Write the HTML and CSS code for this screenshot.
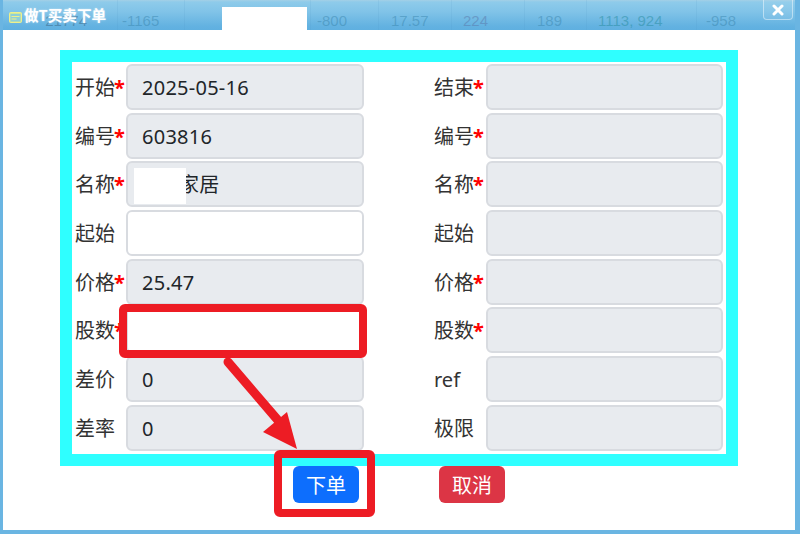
FILE: index.html
```html
<!DOCTYPE html>
<html lang="zh-CN">
<head>
<meta charset="utf-8">
<title>做T买卖下单</title>
<link rel="stylesheet" href="styles.css">
</head>
<body>
<div class="window">
  <header class="titlebar">
    <div class="ghost-row">
      <span class="ghost c1">21774</span>
      <span class="ghost c2">-1165</span>
      <span class="ghost c3"></span>
      <span class="ghost c4">-800</span>
      <span class="ghost c5">17.57</span>
      <span class="ghost c6">224</span>
      <span class="ghost c7">189</span>
      <span class="ghost c8">1113, 924</span>
      <span class="ghost c9">-958</span>
    </div>
    <svg class="title-icon" width="13" height="11" viewBox="0 0 13 11">
      <rect x="0.5" y="0.5" width="12" height="10" rx="1" fill="#cfe89a" stroke="#eef08c"/>
      <rect x="1.5" y="2" width="10" height="7.5" fill="#8fcfd8"/>
      <rect x="2.5" y="4" width="8" height="1" fill="#eef08c"/>
      <rect x="2.5" y="6.5" width="5" height="1" fill="#eef08c"/>
    </svg>
    <span class="title-text">做T买卖下单</span>
    <div class="mask-title"></div>
    <button class="close" type="button">
      <svg width="12" height="12" viewBox="0 0 12 12"><path d="M2 2 10 10M10 2 2 10" stroke="#fff" stroke-width="3" stroke-linecap="round"/></svg>
    </button>
  </header>
  <main class="content">
    <form class="frame">
      <div class="row"><label class="lbl">开始<b>*</b></label><div class="field ro">2025-05-16</div></div>
      <div class="row"><label class="lbl">结束<b>*</b></label><div class="field ro"></div></div>
      <div class="row"><label class="lbl">编号<b>*</b></label><div class="field ro">603816</div></div>
      <div class="row"><label class="lbl">编号<b>*</b></label><div class="field ro"></div></div>
      <div class="row"><label class="lbl">名称<b>*</b></label><div class="field ro"><span class="mask-name"></span>家居</div></div>
      <div class="row"><label class="lbl">名称<b>*</b></label><div class="field ro"></div></div>
      <div class="row"><label class="lbl">起始</label><div class="field"></div></div>
      <div class="row"><label class="lbl">起始</label><div class="field ro"></div></div>
      <div class="row"><label class="lbl">价格<b>*</b></label><div class="field ro">25.47</div></div>
      <div class="row"><label class="lbl">价格<b>*</b></label><div class="field ro"></div></div>
      <div class="row"><label class="lbl">股数<b>*</b></label><div class="field"></div></div>
      <div class="row"><label class="lbl">股数<b>*</b></label><div class="field ro"></div></div>
      <div class="row"><label class="lbl">差价</label><div class="field ro">0</div></div>
      <div class="row"><label class="lbl">ref</label><div class="field ro"></div></div>
      <div class="row"><label class="lbl">差率</label><div class="field ro">0</div></div>
      <div class="row"><label class="lbl">极限</label><div class="field ro"></div></div>
    </form>
    <div class="actions">
      <button class="btn primary" type="button">下单</button>
      <button class="btn danger" type="button">取消</button>
    </div>
  </main>
  <svg class="annotations" width="800" height="534" viewBox="0 0 800 534">
    <rect x="123" y="308" width="240" height="46" rx="2" fill="none" stroke="#ed1c24" stroke-width="8"/>
    <rect x="278" y="454" width="93" height="59" rx="2" fill="none" stroke="#ed1c24" stroke-width="8"/>
    <path d="M228 362 282 425" stroke="#ed1c24" stroke-width="9" stroke-linecap="round" fill="none"/>
    <path d="M287 412 263 432 297 449Z" fill="#ed1c24"/>
  </svg>
</div>
</body>
</html>
```
FILE: styles.css
```css
* { box-sizing: border-box; }
html, body { margin: 0; padding: 0; }
body {
  width: 800px;
  height: 534px;
  overflow: hidden;
  font-family: "Noto Sans", "Noto Sans CJK SC", sans-serif;
  color: #212529;
}
.window {
  position: relative;
  width: 800px;
  height: 534px;
  display: flex;
  flex-direction: column;
  background: #6ab5e2;
  border-left: 3px solid #6ab5e2;
  border-right: 5px solid #6ab5e2;
  border-bottom: 4px solid #6ab5e2;
  overflow: hidden;
}
.titlebar {
  flex: 0 0 30px;
  margin: 0 -5px 0 -3px;
  position: relative;
  display: flex;
  align-items: center;
  padding: 0 0 0 9px;
  background: linear-gradient(#a4d0e6 0, #8ecbea 2px, #80c3e8 12px, #63b2e1 26px, #5fb0e0 30px);
}
.ghost-row {
  position: absolute;
  inset: 0;
  display: grid;
  grid-template-columns: 118px 67px 126px 68px 73px 73px 62px 110px 103px;
  font-family: "Liberation Sans", sans-serif;
  font-size: 15px;
  line-height: 41px;
  color: rgba(50, 125, 165, 0.42);
}
.ghost {
  border-right: 1px solid rgba(70, 140, 190, 0.1);
  height: 30px;
  overflow: hidden;
  white-space: nowrap;
}
.c1 { text-align: right; padding-right: 30px; color: rgba(50, 90, 120, 0.45); }
.c2 { padding-left: 4px; }
.c4 { padding-left: 6px; }
.c5 { padding-left: 12px; }
.c6 { padding-left: 11px; color: rgba(90, 120, 170, 0.5); }
.c7 { padding-left: 12px; }
.c8 { padding-left: 11px; color: rgba(40, 140, 160, 0.5); }
.c9 { padding-left: 9px; }
.title-icon { position: relative; flex: none; margin-top: 4px; }
.title-text {
  position: relative;
  margin-left: 2px;
  margin-top: -1px;
  font: bold 14.6px "Noto Sans CJK SC", "Liberation Sans", sans-serif;
  color: #fff;
  text-shadow: 0 0 2px rgba(255, 255, 255, 0.6);
}
.mask-title {
  position: absolute;
  left: 222px;
  top: 7px;
  width: 85px;
  height: 23px;
  background: #fff;
}
.close {
  position: absolute;
  left: 763px;
  top: -2px;
  width: 30px;
  height: 22px;
  padding: 2px 0 0;
  display: flex;
  align-items: center;
  justify-content: center;
  background: rgba(255, 255, 255, 0.06);
  border: 1px solid rgba(255, 255, 255, 0.45);
  border-radius: 0 0 4px 4px;
}
.content {
  flex: 1;
  min-height: 0;
  background: #fff;
  padding: 20px 0 0 57px;
}
.frame {
  width: 678px;
  height: 416px;
  border: 12px solid #2fffff;
  padding: 2px 0 0;
  display: grid;
  grid-template-columns: 292px 292px;
  grid-auto-rows: 46px;
  column-gap: 68px;
  row-gap: 2.67px;
}
.row { display: flex; }
.row:nth-child(even) { padding-right: 1px; }
.row:nth-child(even) .lbl { padding-left: 2px; }
.lbl {
  flex: 0 0 54px;
  padding: 1px 0 0 3px;
  font-size: 20px;
  line-height: 46px;
  white-space: nowrap;
  color: #333;
}
.lbl b { color: #f00; font-weight: bold; margin-left: -1px; }
.field {
  flex: 1;
  padding: 1px 14px 0;
  font-size: 20px;
  line-height: 42px;
  letter-spacing: 0.25px;
  background: #fff;
  border: 2px solid #d8dbe0;
  border-radius: 6px;
  overflow: hidden;
  white-space: nowrap;
}
.field.ro { background: #e8ebef; }
.mask-name {
  position: relative;
  display: inline-block;
  vertical-align: middle;
  width: 52px;
  height: 36px;
  margin: -2px -7px 0 -8px;
  background: #fff;
}
.actions {
  width: 678px;
  display: flex;
  justify-content: center;
  gap: 80px;
}
.btn {
  width: 66px;
  height: 37px;
  padding: 0;
  border: 0;
  border-radius: 6px;
  font: 20px/37px "Noto Sans CJK SC", sans-serif;
  color: #fff;
}
.primary { background: #0d6efd; }
.danger { background: #dc3545; }
.annotations {
  position: absolute;
  left: -3px;
  top: 0;
  pointer-events: none;
}
```
